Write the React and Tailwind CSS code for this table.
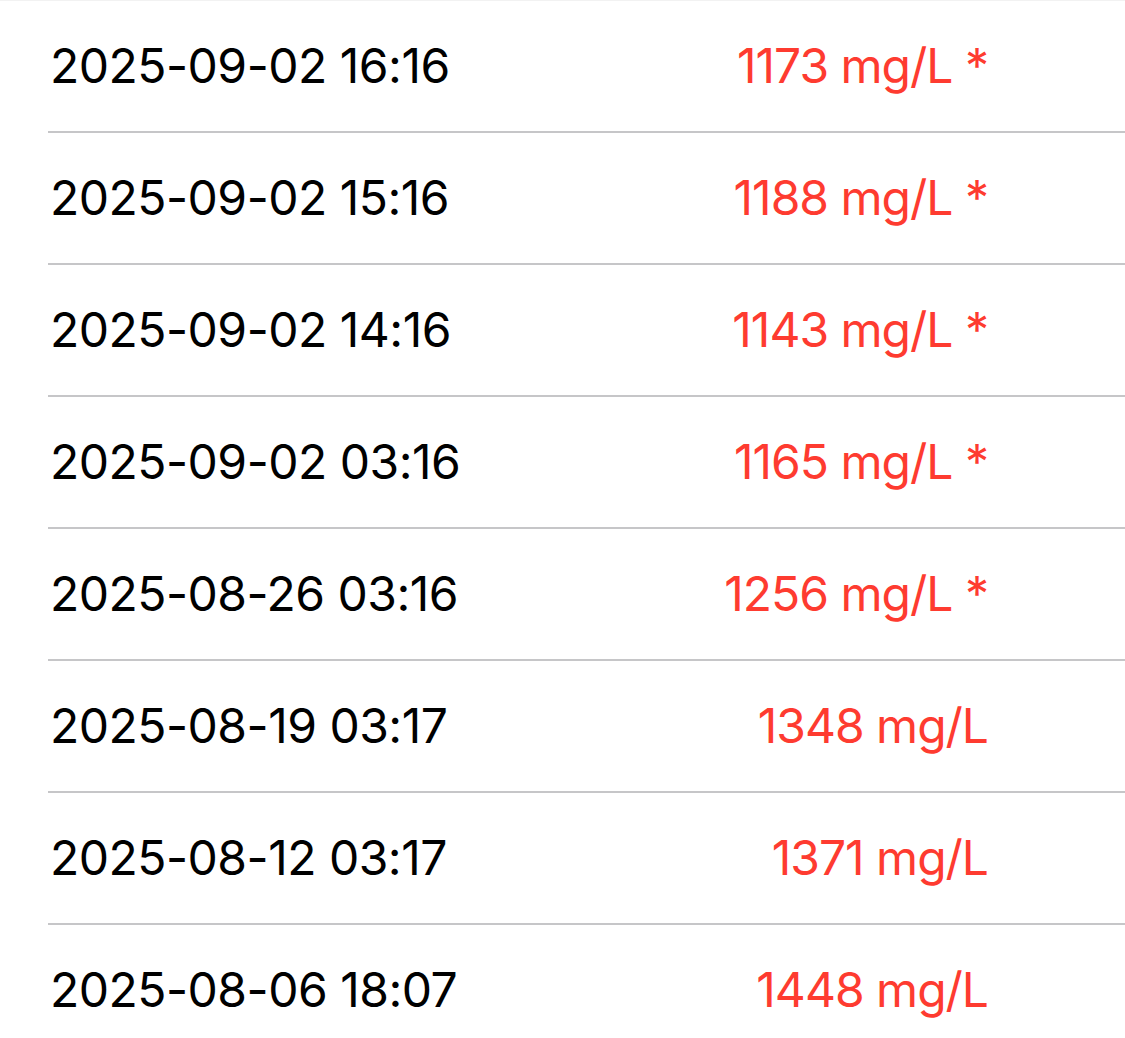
import React from "react";

const readings = [
  { time: "2025-09-02 16:16", value: 1173, flagged: true },
  { time: "2025-09-02 15:16", value: 1188, flagged: true },
  { time: "2025-09-02 14:16", value: 1143, flagged: true },
  { time: "2025-09-02 03:16", value: 1165, flagged: true },
  { time: "2025-08-26 03:16", value: 1256, flagged: true },
  { time: "2025-08-19 03:17", value: 1348, flagged: false },
  { time: "2025-08-12 03:17", value: 1371, flagged: false },
  { time: "2025-08-06 18:07", value: 1448, flagged: false },
];

const App = () => {
  return (
    <div
      className="bg-white min-h-screen border-t border-[#f2f2f2]"
      style={{ fontFamily: "Inter, 'Noto Sans', sans-serif" }}
    >
      {readings.map((r) => (
        <div
          key={r.time}
          className="ml-[48px] h-[132px] box-border border-b-2 border-[#c6c6c8] flex items-center justify-between pl-[2px] pr-[137px]"
        >
          <span className="text-[48px] text-black tracking-[-0.5px]">
            {r.time}
          </span>
          <span className="text-[48px] text-[#fe3b30] tracking-[-1px]">
            {r.value} mg/L{r.flagged ? " *" : ""}
          </span>
        </div>
      ))}
    </div>
  );
};

export default App;
